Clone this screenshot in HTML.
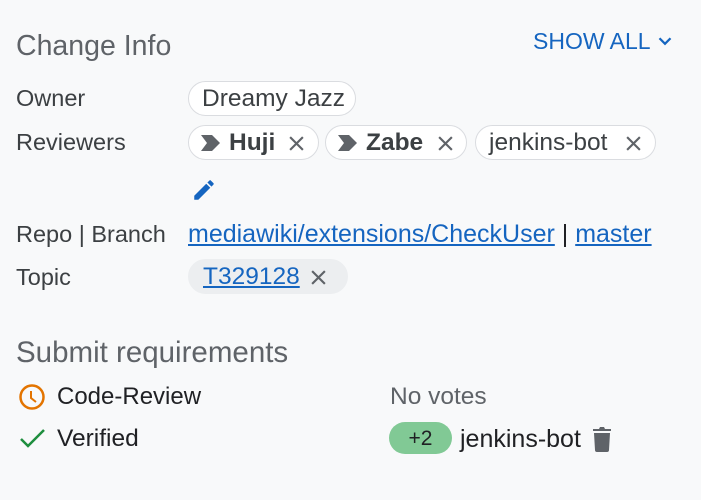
<!DOCTYPE html>
<html><head><meta charset="utf-8"><style>
body{margin:0;width:701px;height:500px;background:#f8f9fa;font-family:"Liberation Sans",sans-serif;color:#202124;position:relative;overflow:hidden}
.a{position:absolute;white-space:nowrap}
.t{font-size:28.5px;color:#5f6368}
.l{font-size:23.5px;color:#3c4043}
.chip{position:absolute;height:33px;border:1px solid #dadce0;border-radius:18px;background:#fff;font-size:24.5px;color:#3c4043;line-height:33px;box-sizing:content-box;white-space:nowrap}
a{color:#1565c0;text-decoration:underline}
.x{position:absolute;top:9px}
</style></head><body>
<div class="a t" style="left:16px;top:30px">Change Info</div>
<div class="a" style="left:533px;top:28px;font-size:23px;color:#1565c0">SHOW ALL<svg width="22" height="22" viewBox="0 0 24 24" style="margin-left:3px;vertical-align:-3px"><path d="M6 9l6 6 6-6" fill="none" stroke="#1565c0" stroke-width="2.5"/></svg></div>

<div class="a l" style="left:16px;top:85px">Owner</div>
<div class="chip" style="left:188px;top:81px;width:166px"><span style="margin-left:13px">Dreamy Jazz</span></div>

<div class="a l" style="left:16px;top:129px">Reviewers</div>
<div class="chip" style="left:188px;top:125px;width:129px">
<svg class="a" style="left:12px;top:9px" width="20" height="16" viewBox="0 0 20 16"><path d="M0 0h11l8 8-8 8H0l6-8z" fill="#5f6368"/></svg>
<b class="a" style="left:40px;top:0">Huji</b>
<svg class="x" style="left:99px" width="17" height="17" viewBox="0 0 16 16"><path d="M2 2l12 12M14 2L2 14" stroke="#5f6368" stroke-width="2"/></svg></div>
<div class="chip" style="left:325px;top:125px;width:140px">
<svg class="a" style="left:12px;top:9px" width="20" height="16" viewBox="0 0 20 16"><path d="M0 0h11l8 8-8 8H0l6-8z" fill="#5f6368"/></svg>
<b class="a" style="left:40px;top:0">Zabe</b>
<svg class="x" style="left:111px" width="17" height="17" viewBox="0 0 16 16"><path d="M2 2l12 12M14 2L2 14" stroke="#5f6368" stroke-width="2"/></svg></div>
<div class="chip" style="left:475px;top:125px;width:179px"><span style="margin-left:13px">jenkins-bot</span>
<svg class="x" style="left:149px" width="17" height="17" viewBox="0 0 16 16"><path d="M2 2l12 12M14 2L2 14" stroke="#5f6368" stroke-width="2"/></svg></div>
<svg class="a" style="left:191px;top:177px" width="26" height="26" viewBox="0 0 24 24"><path d="M3 17.25V21h3.75L17.81 9.94l-3.75-3.75L3 17.25zM20.71 7.04a1 1 0 000-1.41l-2.34-2.34a1 1 0 00-1.41 0l-1.83 1.83 3.75 3.75 1.83-1.83z" fill="#1565c0"/></svg>

<div class="a l" style="left:16px;top:221px">Repo | Branch</div>
<div class="a" style="left:188px;top:220px;font-size:25px;color:#202124"><a>mediawiki/extensions/CheckUser</a> | <a>master</a></div>

<div class="a l" style="left:16px;top:264px">Topic</div>
<div class="chip" style="left:188px;top:259px;width:158px;background:#eceef0;border-color:#eceef0"><a style="margin-left:14px">T329128</a>
<svg class="x" style="left:121px" width="17" height="17" viewBox="0 0 16 16"><path d="M2 2l12 12M14 2L2 14" stroke="#5f6368" stroke-width="2"/></svg></div>

<div class="a t" style="left:16px;top:336px;font-size:29.5px">Submit requirements</div>
<svg class="a" style="left:18px;top:383px" width="28" height="28" viewBox="0 0 28 28"><circle cx="14" cy="14" r="11.5" fill="none" stroke="#e37400" stroke-width="2.5"/><path d="M13 8v7l5 4" fill="none" stroke="#e37400" stroke-width="2"/></svg>
<div class="a" style="left:57px;top:383px;font-size:24px">Code-Review</div>
<div class="a l" style="left:390px;top:383px;color:#5f6368;font-size:24.5px">No votes</div>
<svg class="a" style="left:19px;top:428px" width="28" height="22" viewBox="0 0 28 22"><path d="M2 11l7 7L25 2" fill="none" stroke="#1e8e3e" stroke-width="2.5"/></svg>
<div class="a" style="left:57px;top:425px;font-size:24.5px">Verified</div>
<div class="a" style="left:389px;top:422px;width:63px;height:32px;border-radius:16px;background:#81c995;font-size:21px;line-height:34px;text-align:center">+2</div>
<div class="a" style="left:460px;top:425px;font-size:25px">jenkins-bot</div>
<svg class="a" style="left:591px;top:426px" width="22" height="26" viewBox="0 0 22 26"><path d="M3 7h16l-1 17a2 2 0 01-2 2H6a2 2 0 01-2-2zM2 3h6l1-2h4l1 2h6v2H2z" fill="#5f6368"/></svg>
</body></html>
